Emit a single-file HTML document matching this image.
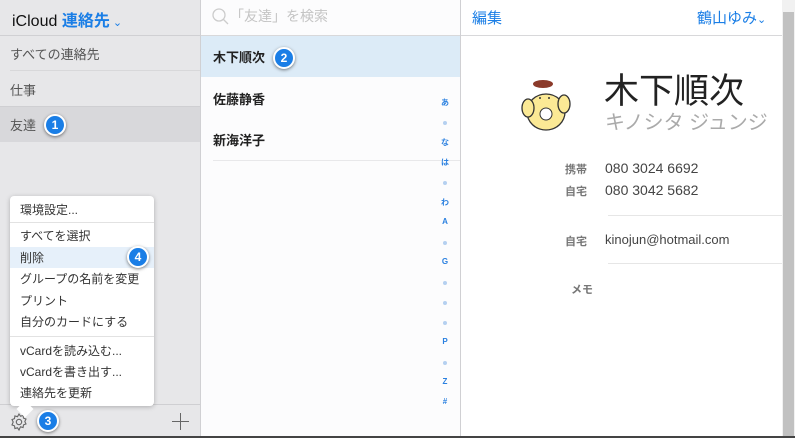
<!DOCTYPE html>
<html><head><meta charset="utf-8"><style>
*{margin:0;padding:0;box-sizing:border-box}
body{width:795px;height:438px;overflow:hidden;position:relative;background:#fff;font-family:"Liberation Sans","Noto Sans CJK JP",sans-serif;color:#333}
.a{position:absolute;white-space:nowrap}
.badge{position:absolute;width:22px;height:22px;border-radius:50%;background:#1a7ee6;border:2px solid #fff;box-shadow:0 1px 3px rgba(0,0,0,.5);color:#fff;font-size:12px;font-weight:bold;text-align:center;line-height:18px}
.idx{position:absolute;left:438px;width:14px;text-align:center;font-size:8px;font-weight:bold;color:#2a80e0}
.dot{position:absolute;left:443px;width:4px;height:4px;border-radius:50%;background:#b5d0f0}
.mi{position:absolute;left:20px;font-size:12px;color:#333}
</style></head><body>
<div class="a" style="left:0;top:0;width:200px;height:438px;background:#e7e7e9"></div>
<div class="a" style="left:0;top:35px;width:200px;height:1px;background:#d0d0d3"></div>
<div class="a" style="left:12px;top:7px;font-size:16px;color:#111">iCloud <span style="color:#1a7ee6;font-weight:bold">連絡先</span><span style="color:#1a7ee6;font-size:11px"> ⌄</span></div>
<div class="a" style="left:10px;top:44px;font-size:13px;color:#555">すべての連絡先</div>
<div class="a" style="left:10px;top:70px;width:190px;height:1px;background:#d8d8da"></div>
<div class="a" style="left:10px;top:80px;font-size:13px;color:#555">仕事</div>
<div class="a" style="left:0;top:106px;width:200px;height:1px;background:#cfcfd2"></div>
<div class="a" style="left:0;top:107px;width:200px;height:35px;background:#d8d8db"></div>
<div class="a" style="left:10px;top:115px;font-size:13px;color:#555">友達</div>
<div class="badge" style="left:44px;top:114px">1</div>
<div class="a" style="left:0;top:404px;width:200px;height:1px;background:#cfcfd2"></div>
<svg class="a" style="left:9px;top:412px" width="20" height="20" viewBox="0 0 20 20"><path d="M10 2l1.5 2.2 2.6-.7.4 2.6 2.5 1-1.2 2.4 1.2 2.4-2.5 1-.4 2.6-2.6-.7L10 18l-1.5-2.2-2.6.7-.4-2.6-2.5-1L4.2 10 3 7.6l2.5-1 .4-2.6 2.6.7z" fill="none" stroke="#666" stroke-width="1.1"/><circle cx="10" cy="10" r="2.7" fill="none" stroke="#666" stroke-width="1.1"/></svg>
<div class="badge" style="left:37px;top:410px">3</div>
<div class="a" style="left:172px;top:421px;width:17px;height:1px;background:#666"></div>
<div class="a" style="left:180px;top:413px;width:1px;height:17px;background:#666"></div>
<div class="a" style="left:10px;top:196px;width:144px;height:210px;background:#fff;border-radius:4px;box-shadow:0 1px 5px rgba(0,0,0,.25)"></div>
<div class="a" style="left:19px;top:403px;width:12px;height:12px;background:#fff;transform:rotate(45deg)"></div>
<div class="a" style="left:10px;top:222px;width:144px;height:1px;background:#e2e2e2"></div>
<div class="a" style="left:10px;top:247px;width:144px;height:21px;background:#e6f0fa"></div>
<div class="a" style="left:10px;top:336px;width:144px;height:1px;background:#e2e2e2"></div>
<div class="mi" style="top:201px">環境設定...</div>
<div class="mi" style="top:227px">すべてを選択</div>
<div class="mi" style="top:249px">削除</div>
<div class="mi" style="top:270px">グループの名前を変更</div>
<div class="mi" style="top:292px">プリント</div>
<div class="mi" style="top:313px">自分のカードにする</div>
<div class="mi" style="top:342px">vCardを読み込む...</div>
<div class="mi" style="top:363px">vCardを書き出す...</div>
<div class="mi" style="top:384px">連絡先を更新</div>
<div class="badge" style="left:127px;top:246px">4</div>
<div class="a" style="left:200px;top:0;width:1px;height:438px;background:#d0d0d3"></div>
<div class="a" style="left:201px;top:0;width:259px;height:438px;background:#fcfcfd"></div>
<div class="a" style="left:201px;top:35px;width:259px;height:1px;background:#d8d8da"></div>
<svg class="a" style="left:210px;top:7px" width="20" height="20" viewBox="0 0 20 20"><circle cx="9" cy="8" r="6" fill="none" stroke="#ccc" stroke-width="1.3"/><path d="M13 12l5 5" stroke="#ccc" stroke-width="1.3"/></svg>
<div class="a" style="left:230px;top:6px;font-size:14px;color:#c4c4c4">「友達」を検索</div>
<div class="a" style="left:201px;top:36px;width:259px;height:41px;background:#dcebf7"></div>
<div class="a" style="left:213px;top:47px;font-size:13px;font-weight:bold;color:#222">木下順次</div>
<div class="badge" style="left:273px;top:47px">2</div>
<div class="a" style="left:213px;top:89px;font-size:13px;font-weight:bold;color:#222">佐藤静香</div>
<div class="a" style="left:213px;top:130px;font-size:13px;font-weight:bold;color:#222">新海洋子</div>
<div class="a" style="left:213px;top:160px;width:247px;height:1px;background:#e8e8ea"></div>
<div class="idx" style="top:97px">あ</div><div class="dot" style="top:121px"></div><div class="idx" style="top:137px">な</div><div class="idx" style="top:157px">は</div><div class="dot" style="top:181px"></div><div class="idx" style="top:197px">わ</div><div class="idx" style="top:217px">A</div><div class="dot" style="top:241px"></div><div class="idx" style="top:257px">G</div><div class="dot" style="top:281px"></div><div class="dot" style="top:301px"></div><div class="dot" style="top:321px"></div><div class="idx" style="top:337px">P</div><div class="dot" style="top:361px"></div><div class="idx" style="top:377px">Z</div><div class="idx" style="top:397px">#</div>
<div class="a" style="left:460px;top:0;width:1px;height:438px;background:#d0d0d3"></div>
<div class="a" style="left:461px;top:35px;width:321px;height:1px;background:#d8d8da"></div>
<div class="a" style="left:472px;top:7px;font-size:15px;color:#1a7ee6">編集</div>
<div class="a" style="left:697px;top:7px;font-size:15px;color:#1a7ee6">鶴山ゆみ<span style="font-size:11px">⌄</span></div>
<svg class="a" style="left:516px;top:76px" width="60" height="60" viewBox="0 0 60 60"><ellipse cx="30" cy="36" rx="19" ry="18" fill="#fbe995" stroke="#333" stroke-width="1.3"/><ellipse cx="12" cy="32" rx="6" ry="9" fill="#fbe995" stroke="#333" stroke-width="1.3"/><ellipse cx="48" cy="28" rx="6" ry="9" fill="#fbe995" stroke="#333" stroke-width="1.3"/><ellipse cx="27" cy="8" rx="10" ry="4" fill="#8b3a2a"/><circle cx="30" cy="38" r="6" fill="#fff" stroke="#333"/><circle cx="24" cy="22" r="1" fill="#333"/><circle cx="33" cy="22" r="1" fill="#333"/></svg>
<div class="a" style="left:604px;top:63px;font-size:35px;color:#222">木下順次</div>
<div class="a" style="left:605px;top:106px;font-size:20px;color:#aaa">キノシタ ジュンジ</div>
<div class="a" style="left:565px;top:161px;font-size:11px;color:#777;font-weight:bold">携帯</div>
<div class="a" style="left:605px;top:160px;font-size:14px;color:#444">080 3024 6692</div>
<div class="a" style="left:565px;top:183px;font-size:11px;color:#777;font-weight:bold">自宅</div>
<div class="a" style="left:605px;top:182px;font-size:14px;color:#444">080 3042 5682</div>
<div class="a" style="left:608px;top:215px;width:174px;height:1px;background:#e6e6e6"></div>
<div class="a" style="left:565px;top:233px;font-size:11px;color:#777;font-weight:bold">自宅</div>
<div class="a" style="left:605px;top:232px;font-size:13px;color:#444">kinojun@hotmail.com</div>
<div class="a" style="left:608px;top:263px;width:174px;height:1px;background:#e6e6e6"></div>
<div class="a" style="left:571px;top:281px;font-size:11px;color:#777;font-weight:bold">メモ</div>
<div class="a" style="left:782px;top:0;width:13px;height:438px;background:#f1f1f1"></div>
<div class="a" style="left:783px;top:12px;width:11px;height:426px;background:#c1c1c1"></div>
<div class="a" style="left:0;top:436px;width:795px;height:2px;background:#444"></div>
</body></html>
